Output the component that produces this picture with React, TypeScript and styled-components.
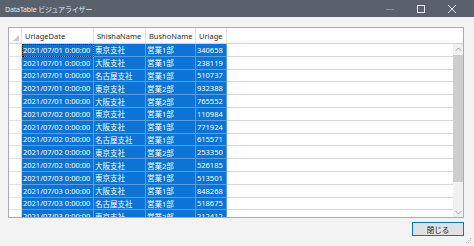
import styled, { createGlobalStyle } from "styled-components";

type TRow = {
  date: string;
  shisha: string;
  busho: string;
  uriage: string;
};

const rows: TRow[] = [
  { date: "2021/07/01 0:00:00", shisha: "東京支社", busho: "営業1部", uriage: "340658" },
  { date: "2021/07/01 0:00:00", shisha: "大阪支社", busho: "営業1部", uriage: "238119" },
  { date: "2021/07/01 0:00:00", shisha: "名古屋支社", busho: "営業1部", uriage: "510737" },
  { date: "2021/07/01 0:00:00", shisha: "東京支社", busho: "営業2部", uriage: "932388" },
  { date: "2021/07/01 0:00:00", shisha: "大阪支社", busho: "営業2部", uriage: "765552" },
  { date: "2021/07/02 0:00:00", shisha: "東京支社", busho: "営業1部", uriage: "110984" },
  { date: "2021/07/02 0:00:00", shisha: "大阪支社", busho: "営業1部", uriage: "771924" },
  { date: "2021/07/02 0:00:00", shisha: "名古屋支社", busho: "営業1部", uriage: "615571" },
  { date: "2021/07/02 0:00:00", shisha: "東京支社", busho: "営業2部", uriage: "253350" },
  { date: "2021/07/02 0:00:00", shisha: "大阪支社", busho: "営業2部", uriage: "526185" },
  { date: "2021/07/03 0:00:00", shisha: "東京支社", busho: "営業1部", uriage: "513501" },
  { date: "2021/07/03 0:00:00", shisha: "大阪支社", busho: "営業1部", uriage: "848268" },
  { date: "2021/07/03 0:00:00", shisha: "名古屋支社", busho: "営業1部", uriage: "518675" },
  { date: "2021/07/03 0:00:00", shisha: "東京支社", busho: "営業2部", uriage: "212412" },
];

const COLS = "13px 72px 52px 50px 31px 1fr";

const App = () => {
  return (
    <>
      <GlobalStyle />
      <Window>
        <TitleBar>
          <Title>DataTable ビジュアライザー</Title>
          <Controls>
            <CtrlButton>
              <svg width="10" height="10" viewBox="0 0 10 10">
                <path d="M1 5.5h8" stroke="#8a919c" strokeWidth="1" />
              </svg>
            </CtrlButton>
            <CtrlButton>
              <svg width="10" height="10" viewBox="0 0 10 10">
                <rect x="1.5" y="1.5" width="7" height="7" fill="none" stroke="#e8eaee" strokeWidth="1" />
              </svg>
            </CtrlButton>
            <CtrlButton>
              <svg width="10" height="10" viewBox="0 0 10 10">
                <path d="M1 1l8 8M9 1l-8 8" stroke="#e8eaee" strokeWidth="1" />
              </svg>
            </CtrlButton>
          </Controls>
        </TitleBar>
        <Body>
          <Grid>
            <HeaderRow>
              <CornerCell>
                <svg width="6" height="6" viewBox="0 0 6 6">
                  <path d="M6 0L6 6L0 6Z" fill="#c8c8c8" />
                </svg>
              </CornerCell>
              <HeaderCell>UriageDate</HeaderCell>
              <HeaderCell>ShishaName</HeaderCell>
              <HeaderCell>BushoName</HeaderCell>
              <HeaderCell>Uriage</HeaderCell>
              <HeaderFill />
            </HeaderRow>
            <GridBody>
              <Rows>
                {rows.map((r, i) => (
                  <Row key={i}>
                    <RowHeader />
                    <Cell $current={i === 0}>{r.date}</Cell>
                    <Cell>{r.shisha}</Cell>
                    <Cell>{r.busho}</Cell>
                    <Cell>{r.uriage}</Cell>
                    <EmptyCell />
                  </Row>
                ))}
              </Rows>
              <ScrollBar>
                <Arrow>
                  <svg width="7" height="5" viewBox="0 0 7 5">
                    <path d="M0.5 4L3.5 1L6.5 4" fill="none" stroke="#a6a6a6" strokeWidth="1" />
                  </svg>
                </Arrow>
                <Track>
                  <Thumb />
                </Track>
                <Arrow>
                  <svg width="7" height="5" viewBox="0 0 7 5">
                    <path d="M0.5 1L3.5 4L6.5 1" fill="none" stroke="#a6a6a6" strokeWidth="1" />
                  </svg>
                </Arrow>
              </ScrollBar>
            </GridBody>
          </Grid>
          <Footer>
            <CloseButton>閉じる</CloseButton>
          </Footer>
        </Body>
        <Grip>
          <svg width="6" height="6" viewBox="0 0 6 6">
            <rect x="4" y="0" width="1" height="1" fill="#b8b8b8" />
            <rect x="2" y="2" width="1" height="1" fill="#b8b8b8" />
            <rect x="4" y="2" width="1" height="1" fill="#b8b8b8" />
            <rect x="0" y="4" width="1" height="1" fill="#b8b8b8" />
            <rect x="2" y="4" width="1" height="1" fill="#b8b8b8" />
            <rect x="4" y="4" width="1" height="1" fill="#b8b8b8" />
          </svg>
        </Grip>
      </Window>
    </>
  );
};

const GlobalStyle = createGlobalStyle`
  html, body {
    margin: 0;
    padding: 0;
    background: #f0f0f0;
  }
  body {
    font-family: "Noto Sans", "Noto Sans CJK JP", sans-serif;
  }
`;

const Window = styled.div`
  position: relative;
  width: 474px;
  height: 246px;
  display: flex;
  flex-direction: column;
  background: #f3f3f3;
  overflow: hidden;
`;

const TitleBar = styled.div`
  height: 17px;
  display: flex;
  align-items: center;
  justify-content: space-between;
  background: #59616d;
  padding-left: 5px;
`;

const Title = styled.div`
  color: #e6e8eb;
  font-size: 7px;
  font-family: "Noto Sans", "Noto Sans CJK JP", sans-serif;
  letter-spacing: -0.15px;
`;

const Controls = styled.div`
  display: flex;
  height: 100%;
  padding-right: 7px;
`;

const CtrlButton = styled.div`
  width: 31px;
  height: 100%;
  display: flex;
  align-items: center;
  justify-content: center;
`;

const Body = styled.div`
  flex: 1;
  display: flex;
  flex-direction: column;
  padding: 10px 10px 0 8px;
`;

const Grid = styled.div`
  height: 191px;
  border: 1px solid #a9adb3;
  background: #ffffff;
  display: flex;
  flex-direction: column;
  overflow: hidden;
  box-sizing: border-box;
`;

const HeaderRow = styled.div`
  height: 16px;
  flex-shrink: 0;
  display: grid;
  grid-template-columns: ${COLS};
  background: linear-gradient(#ffffff 0%, #ffffff 70%, #f7f7f7 100%);
  border-bottom: 1px solid #d4d4d4;
  box-sizing: border-box;
`;

const CornerCell = styled.div`
  display: flex;
  align-items: flex-end;
  justify-content: flex-end;
  padding: 0 2px 2px 0;
  border-right: 1px solid #e2e2e2;
`;

const HeaderCell = styled.div`
  display: flex;
  align-items: center;
  padding-left: 3px;
  font-size: 7.5px;
  color: #2b2b2b;
  border-right: 1px solid #e2e2e2;
  white-space: nowrap;
  overflow: hidden;
`;

const HeaderFill = styled.div``;

const GridBody = styled.div`
  flex: 1;
  display: flex;
  min-height: 0;
`;

const Rows = styled.div`
  flex: 1;
  display: flex;
  flex-direction: column;
  overflow: hidden;
`;

const Row = styled.div`
  height: 12.8px;
  flex-shrink: 0;
  display: grid;
  grid-template-columns: ${COLS};
`;

const RowHeader = styled.div`
  background: #ffffff;
  border-right: 1px solid #d4d4d4;
  border-bottom: 1px solid #e4e4e4;
`;

const Cell = styled.div<{ $current?: boolean }>`
  display: flex;
  align-items: center;
  padding-left: 1px;
  background: #0b74d6;
  color: #ffffff;
  font-size: 7.5px;
  white-space: nowrap;
  overflow: hidden;
  border-right: 1px solid #5c9ee0;
  border-bottom: 1px solid #5c9ee0;
  box-sizing: border-box;
  outline: ${(p) => (p.$current ? "1px dotted #1a1a1a" : "none")};
  outline-offset: -1px;
`;

const EmptyCell = styled.div`
  background: #ffffff;
  border-bottom: 1px solid #d8d8d8;
`;

const ScrollBar = styled.div`
  width: 10px;
  flex-shrink: 0;
  display: flex;
  flex-direction: column;
  background: #f0f0f0;
`;

const Arrow = styled.div`
  height: 10px;
  display: flex;
  align-items: center;
  justify-content: center;
`;

const Track = styled.div`
  flex: 1;
  padding: 1px 0 25px;
  display: flex;
  flex-direction: column;
`;

const Thumb = styled.div`
  flex: 1;
  background: #cdcdcd;
`;

const Footer = styled.div`
  display: flex;
  justify-content: flex-end;
  padding-top: 4px;
  padding-right: 0;
`;

const CloseButton = styled.button`
  width: 52px;
  height: 14px;
  padding: 0;
  margin: 0;
  background: #e1e1e1;
  border: 1px solid #0078d7;
  font-size: 7.5px;
  font-family: "Noto Sans CJK JP", sans-serif;
  color: #1a1a1a;
  display: flex;
  align-items: center;
  justify-content: center;
`;

const Grip = styled.div`
  position: absolute;
  right: 2px;
  bottom: 2px;
  line-height: 0;
`;

export default App;
